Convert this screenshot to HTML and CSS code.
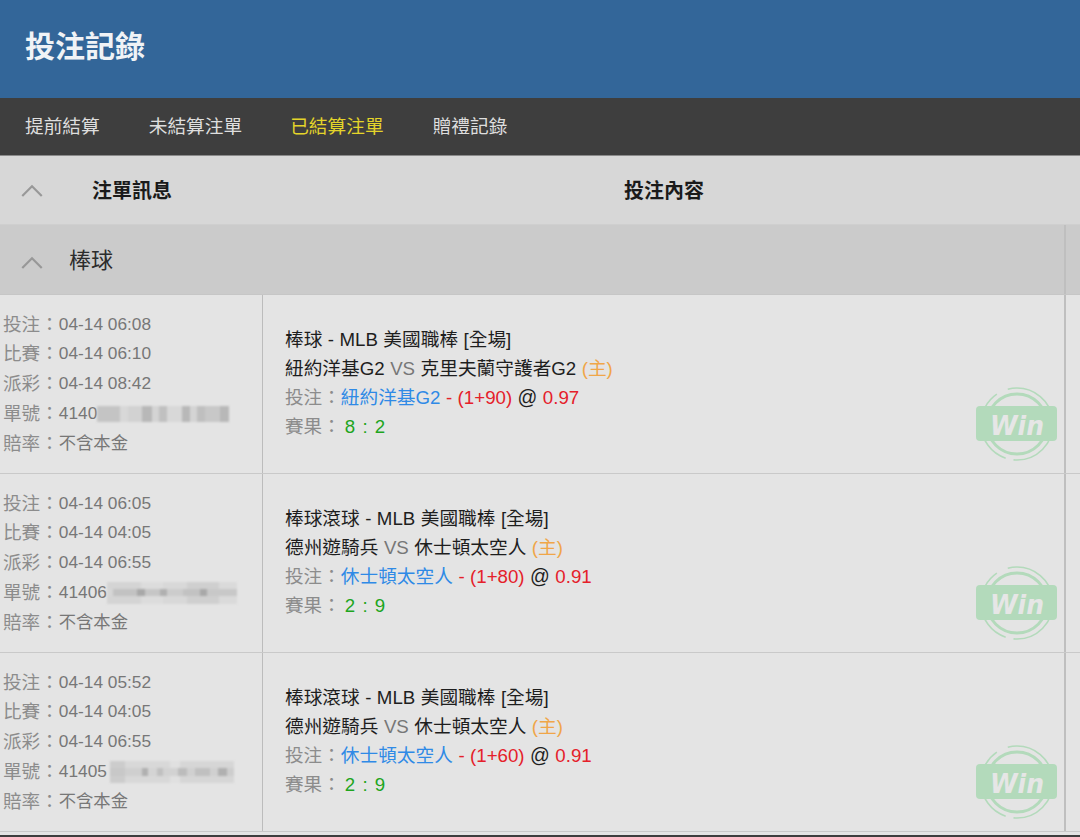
FILE: index.html
```html
<!DOCTYPE html>
<html lang="zh-Hant">
<head>
<meta charset="utf-8">
<title>投注記錄</title>
<link rel="stylesheet" href="styles.css">
</head>
<body>
<svg class="defs" width="0" height="0" aria-hidden="true">
  <symbol id="chev" viewBox="0 0 20 12"><polyline points="1,11 10,2 19,11" fill="none" stroke="#989898" stroke-width="2"/></symbol>
  <symbol id="win" viewBox="0 0 82 74">
    <circle cx="41" cy="37" r="30" fill="none" stroke="#b3dabb" stroke-width="3"/>
    <circle cx="41" cy="37" r="36" fill="none" stroke="#b3dabb" stroke-width="1.6" stroke-dasharray="60 8 80 12"/>
    <rect x="0" y="19" width="81" height="35" rx="4" fill="#b3dabb"/>
  </symbol>
</svg>
<div class="page">
  <header class="title"><h1>投注記錄</h1></header>
  <nav class="tabs">
    <a class="tab">提前結算</a>
    <a class="tab">未結算注單</a>
    <a class="tab active">已結算注單</a>
    <a class="tab">贈禮記錄</a>
  </nav>
  <div class="head">
    <svg class="chev"><use href="#chev"/></svg>
    <div class="head-info">注單訊息</div>
    <div class="head-content">投注內容</div>
  </div>
  <div class="sport">
    <div class="sport-main">
      <svg class="chev"><use href="#chev"/></svg>
      <span class="sport-name">棒球</span>
    </div>
    <div class="side"></div>
  </div>

  <section class="row">
    <div class="info">
      <div class="line"><span class="lab">投注：</span>04-14 06:08</div>
      <div class="line"><span class="lab">比賽：</span>04-14 06:10</div>
      <div class="line"><span class="lab">派彩：</span>04-14 08:42</div>
      <div class="line"><span class="lab">單號：</span>4140<span class="mosaic m1"></span></div>
      <div class="line"><span class="lab">賠率：</span>不含本金</div>
    </div>
    <div class="detail">
      <div class="dl dark">棒球 - MLB 美國職棒 [全場]</div>
      <div class="dl dark">紐約洋基G2 <span class="vs">VS</span> 克里夫蘭守護者G2 <span class="home">(主)</span></div>
      <div class="dl"><span class="lab">投注：</span><span class="pick">紐約洋基G2</span> <span class="red">- (1+90)</span> <span class="at">@</span> <span class="red">0.97</span></div>
      <div class="dl"><span class="lab">賽果：</span><span class="score">8 : 2</span></div>
      <svg class="stamp" viewBox="0 0 82 74"><use href="#win"/><text x="14" y="48" class="win-text" textLength="54" lengthAdjust="spacingAndGlyphs">Win</text></svg>
    </div>
    <div class="side"></div>
  </section>

  <section class="row">
    <div class="info">
      <div class="line"><span class="lab">投注：</span>04-14 06:05</div>
      <div class="line"><span class="lab">比賽：</span>04-14 04:05</div>
      <div class="line"><span class="lab">派彩：</span>04-14 06:55</div>
      <div class="line"><span class="lab">單號：</span>41406<span class="mosaic m2"></span></div>
      <div class="line"><span class="lab">賠率：</span>不含本金</div>
    </div>
    <div class="detail">
      <div class="dl dark">棒球滾球 - MLB 美國職棒 [全場]</div>
      <div class="dl dark">德州遊騎兵 <span class="vs">VS</span> 休士頓太空人 <span class="home">(主)</span></div>
      <div class="dl"><span class="lab">投注：</span><span class="pick">休士頓太空人</span> <span class="red">- (1+80)</span> <span class="at">@</span> <span class="red">0.91</span></div>
      <div class="dl"><span class="lab">賽果：</span><span class="score">2 : 9</span></div>
      <svg class="stamp" viewBox="0 0 82 74"><use href="#win"/><text x="14" y="48" class="win-text" textLength="54" lengthAdjust="spacingAndGlyphs">Win</text></svg>
    </div>
    <div class="side"></div>
  </section>

  <section class="row">
    <div class="info">
      <div class="line"><span class="lab">投注：</span>04-14 05:52</div>
      <div class="line"><span class="lab">比賽：</span>04-14 04:05</div>
      <div class="line"><span class="lab">派彩：</span>04-14 06:55</div>
      <div class="line"><span class="lab">單號：</span>41405<span class="mosaic m3"></span></div>
      <div class="line"><span class="lab">賠率：</span>不含本金</div>
    </div>
    <div class="detail">
      <div class="dl dark">棒球滾球 - MLB 美國職棒 [全場]</div>
      <div class="dl dark">德州遊騎兵 <span class="vs">VS</span> 休士頓太空人 <span class="home">(主)</span></div>
      <div class="dl"><span class="lab">投注：</span><span class="pick">休士頓太空人</span> <span class="red">- (1+60)</span> <span class="at">@</span> <span class="red">0.91</span></div>
      <div class="dl"><span class="lab">賽果：</span><span class="score">2 : 9</span></div>
      <svg class="stamp" viewBox="0 0 82 74"><use href="#win"/><text x="14" y="48" class="win-text" textLength="54" lengthAdjust="spacingAndGlyphs">Win</text></svg>
    </div>
    <div class="side"></div>
  </section>
  <div class="foot"></div>
</div>
</body>
</html>
```
FILE: styles.css
```css
* { box-sizing: border-box; }
html, body { margin: 0; padding: 0; }
body {
  width: 1080px;
  height: 837px;
  overflow: hidden;
  background: #e4e4e4;
  font-family: "Liberation Sans", "Noto Sans CJK TC", sans-serif;
}
.defs { display: block; height: 0; }
.page { display: flex; flex-direction: column; height: 837px; }

.title {
  height: 98px;
  flex: none;
  background: #336699;
  display: flex;
  align-items: center;
  padding: 0 0 5px 25px;
}
.title h1 { margin: 0; font-size: 30px; font-weight: 700; color: #f0f3f6; line-height: 1.2; }

.tabs {
  height: 58px;
  flex: none;
  background: #3e3e3e;
  border-bottom: 1px solid #8a8a8a;
  display: flex;
  align-items: center;
  gap: 49px;
  padding: 0 0 5px 25px;
}
.tab { font-size: 18.7px; color: #dedede; }
.tab.active { color: #e4d42a; margin-left: -1px; }

.head {
  height: 69px;
  flex: none;
  background: #d7d7d7;
  display: flex;
  align-items: center;
  position: relative;
  border-bottom: 1px solid #cfcfcf;
  padding-bottom: 2px;
}
.chev { width: 22px; height: 13px; margin-left: 21px; flex: none; }
.head .chev { margin-top: 2px; }
.head-info { font-size: 20px; font-weight: 700; color: #1a1a1a; margin-left: 49px; width: 532px; }
.head-content { font-size: 20px; font-weight: 700; color: #1a1a1a; }

.sport {
  height: 70px;
  flex: none;
  background: #cbcbcb;
  display: flex;
  border-bottom: 1px solid #c6c6c6;
}
.sport-main { flex: 1; display: flex; align-items: center; padding-bottom: 4px; }
.sport-main .chev { margin-top: 10px; }
.sport-name { font-size: 22px; color: #2c2c2c; margin-left: 26px; }

.side { width: 16px; flex: none; border-left: 2px solid #bfbfbf; }

.row {
  height: 179px;
  flex: none;
  display: flex;
  border-bottom: 1px solid #c9c9c9;
}
.info {
  width: 263px;
  flex: none;
  border-right: 1px solid #bcbcbc;
  padding: 14.5px 0 0 3px;
  font-size: 17.3px;
  color: #777;
}
.line { height: 29.8px; line-height: 29.8px; display: flex; align-items: center; white-space: nowrap; }
.lab { font-size: 18.6px; color: #8c8c8c; }
.mosaic {
  display: inline-block;
  height: 16px;
  filter: blur(0.8px);
}
.m1 {
  width: 132px;
  background: linear-gradient(90deg,
    #c4c4c4 0 23px, #d8d8d8 23px 31px, #d2d2d2 31px 45px, #b8b8b8 45px 55px,
    #d4d4d4 55px 62px, #c0c0c0 62px 70px, #d8d8d8 70px 85px, #b8b8b8 85px 93px,
    #d4d4d4 93px 100px, #bfbfbf 100px 108px, #c8c8c8 108px 123px, #b8b8b8 123px 132px);
}
.m2 {
  width: 130px;
  height: 22px;
  background:
    linear-gradient(90deg,
      #d6d6d6 0 6px, #c2c2c2 6px 30px, #a8a8a8 30px 38px, #c6c6c6 38px 53px,
      #b0b0b0 53px 60px, #cccccc 60px 76px, #c2c2c2 76px 93px, #a8a8a8 93px 100px,
      #c8c8c8 100px 130px) center / 100% 7px no-repeat,
    linear-gradient(90deg, #d4d4d4 0 34px, #dcdcdc 34px 56px, #d8d8d8 56px 80px, #cfcfcf 80px 112px, #dadada 112px 130px);
}
.m3 {
  width: 124px;
  height: 22px;
  margin-left: 3px;
  background:
    linear-gradient(90deg,
      #c8c8c8 0 15px, #cfcfcf 15px 32px, #b0b0b0 32px 38px, #d4d4d4 38px 47px,
      #c0c0c0 47px 53px, #d2d2d2 53px 68px, #bcbcbc 68px 77px, #d0d0d0 77px 85px,
      #c0c0c0 85px 100px, #d0d0d0 100px 108px, #b0b0b0 108px 117px, #cdcdcd 117px 124px) center / 100% 8px no-repeat,
    linear-gradient(90deg, #cccccc 0 15px, #d8d8d8 15px 60px, #e0e0e0 60px 70px, #d6d6d6 70px 124px);
}

.detail {
  flex: 1;
  position: relative;
  padding: 30px 0 0 22px;
  font-size: 18.7px;
}
.dl { height: 29px; line-height: 29px; white-space: nowrap; color: #8c8c8c; word-spacing: 0.25px; }
.dark { color: #1e1e1e; }
.vs { color: #777; }
.home { color: #f0a648; }
.pick { color: #2f8ae6; }
.red { color: #e5202a; }
.at { color: #1e1e1e; font-size: 19.5px; }
.score { color: #1ea51e; word-spacing: 2px; margin-left: 4px; }
.stamp { position: absolute; left: 713px; top: 92px; width: 82px; height: 74px; }
.win-text { font-family: "DejaVu Sans", sans-serif; font-size: 27px; font-weight: 700; font-style: italic; fill: #e6e6e6; }

.foot { flex: 1; border-top: 3px solid #e4e4e4; background: #3e3e3e; }
```
